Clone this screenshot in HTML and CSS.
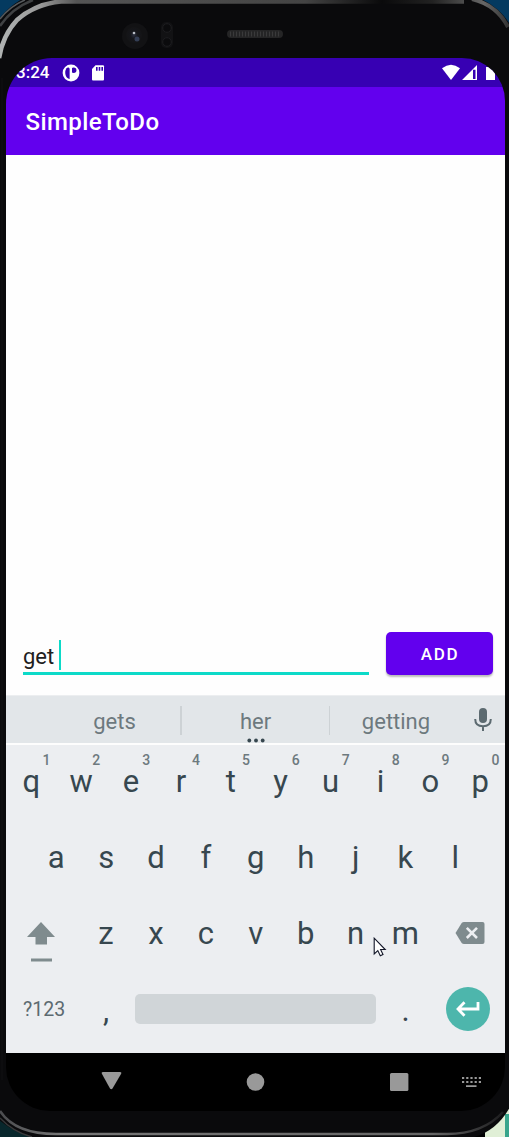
FILE: index.html
```html
<!DOCTYPE html>
<html lang="en">
<head>
<meta charset="utf-8">
<title>SimpleToDo</title>
<link rel="stylesheet" href="styles.css">
</head>
<body>
<main class="device">
  <svg class="frame" width="509" height="1137" viewBox="0 0 509 1137" aria-hidden="true">
    <defs>
      <linearGradient id="rim" gradientUnits="userSpaceOnUse" x1="0" x2="509" y1="0" y2="0">
        <stop offset="0" stop-color="#b0b3b3"/><stop offset=".08" stop-color="#999"/><stop offset=".15" stop-color="#555"/><stop offset=".6" stop-color="#444"/><stop offset=".75" stop-color="#0a0a0b"/><stop offset=".85" stop-color="#222"/><stop offset=".95" stop-color="#666"/><stop offset="1" stop-color="#333"/>
      </linearGradient>
      <linearGradient id="base" gradientUnits="userSpaceOnUse" x1="0" x2="509" y1="0" y2="0">
        <stop offset="0" stop-color="#4b4c4f"/><stop offset=".12" stop-color="#777"/><stop offset=".85" stop-color="#666"/><stop offset="1" stop-color="#161618"/>
      </linearGradient>
      <radialGradient id="lens"><stop offset="0" stop-color="#2b3040"/><stop offset=".45" stop-color="#15161b"/><stop offset="1" stop-color="#141416"/></radialGradient>
    </defs>
    <rect width="509" height="600" fill="#043a60"/>
    <path d="M0 1080h100v57H0z" fill="#08272c"/>
    <path d="M485 1100h24v37h-24z" fill="#e0efd6"/>
    <path d="M505 1114h4v23h-4z" fill="#38a58c"/>
    <path d="M-2 20Q9 6 24-2H479Q500 7 511 26V1105Q498 1130 474 1137H30Q12 1131-2 1119Z" fill="#0a0a0c"/>
    <path d="M0 19Q10 6 25 0" fill="none" stroke="#55595c" stroke-width="1.5"/>
    <path d="M0 26Q12 8 33 0" fill="none" stroke="#3f4143" stroke-width="2.5"/>
    <path d="M-1 58Q3 35 17 20Q35 4 61 1.5H464" fill="none" stroke="url(#rim)" stroke-width="4.6"/>
    <path d="M472 -1Q497 5 508 27" fill="none" stroke="url(#rim)" stroke-width="4"/>
    <path d="M2 78V1080" stroke="#111012"/>
    <path d="M0 1111Q15 1134 56 1134H447Q483 1134 503 1112" fill="none" stroke="url(#base)" stroke-width="2.5"/>
    <path d="M0 1118Q13 1132 32 1137" fill="none" stroke="#38393b" stroke-width="1.5"/>
    <circle cx="135" cy="36" r="13" fill="#121214"/>
    <circle cx="134" cy="35" r="8" fill="url(#lens)"/>
    <circle cx="137" cy="39" r="2.5" fill="#343e55"/>
    <circle cx="134" cy="33" r="1.3" fill="#b8bdc5"/>
    <rect x="161" y="22" width="12" height="26" rx="5" fill="#121214"/>
    <circle cx="167" cy="28" r="4.3" fill="#0b0b0d" stroke="#1d1d20"/>
    <circle cx="167" cy="42" r="4.3" fill="#0b0b0d" stroke="#1d1d20"/>
    <rect x="227" y="30" width="56" height="8" rx="4" fill="#252526"/>
    <path d="M230 34H281" stroke="#3a3a3b" stroke-width="5" stroke-dasharray="1 2"/>
  </svg>

  <div class="screen">
    <div class="status">
      <span class="clock">3:24</span>
      <svg class="status-left" width="44" height="20" viewBox="0 0 44 20">
        <circle cx="9" cy="10" r="8.4" fill="#fff"/>
        <path d="M4.3 5.5C5.5 4 7.5 4.2 7.6 6V16C3.5 15.5 2 9 4.3 5.5Z" fill="#3700b3"/>
        <circle cx="11.7" cy="7.2" r="2.7" fill="#3700b3"/><path d="M8.2 4H10v7.3H8.2z" fill="#fff"/>
        <path d="M33.5 2.2H41q1 0 1 1V16.5q0 1-1 1H31q-1 0-1-1V6Z" fill="#fff"/>
        <path d="M34 4h1.6v3.8H34zM36.7 4h1.6v3.8h-1.6zM39.4 4H41v3.8h-1.6z" fill="#3700b3"/>
      </svg>
      <svg class="status-right" width="63" height="20" viewBox="0 0 63 20">
        <path d="M0 5.2Q9 -1.8 18 5.2L9 17Z" fill="#fff"/>
        <path d="M20 17L35 2V17ZM31 6.7V16H33.5V6.7Z" fill="#fff" fill-rule="evenodd"/>
        <path d="M44 4H53V17H44Z" fill="#fff"/>
      </svg>
    </div>
    <header class="appbar">SimpleToDo</header>
    <section class="content">
      <div class="entry"><span>get</span><i class="caret"></i></div>
      <button class="add">ADD</button>
    </section>

    <div class="suggestions">
      <span class="suggestion first">gets</span>
      <span class="suggestion second">her<svg class="dots" width="18" height="5" viewBox="0 0 18 5"><circle cx="2.3" cy="2.5" r="1.9"/><circle cx="9" cy="2.5" r="1.9"/><circle cx="15.7" cy="2.5" r="1.9"/></svg></span>
      <span class="suggestion third">getting</span>
      <svg class="mic" width="18" height="24" viewBox="0 0 18 24"><rect x="5" y="0" width="8" height="15" rx="4" fill="#5c6a70"/><path d="M1.2 11q0 7.2 7.8 7.2T16.8 11M9 18v5" fill="none" stroke="#5c6a70" stroke-width="2"/></svg>
    </div>

    <div class="keyboard">
      <div class="keys">
        <span class="key">q<sup>1</sup></span><span class="key">w<sup>2</sup></span><span class="key">e<sup>3</sup></span><span class="key">r<sup>4</sup></span><span class="key">t<sup>5</sup></span><span class="key">y<sup>6</sup></span><span class="key">u<sup>7</sup></span><span class="key">i<sup>8</sup></span><span class="key">o<sup>9</sup></span><span class="key">p<sup>0</sup></span>
      </div>
      <div class="keys inset">
        <span class="key">a</span><span class="key">s</span><span class="key">d</span><span class="key">f</span><span class="key">g</span><span class="key">h</span><span class="key">j</span><span class="key">k</span><span class="key">l</span>
      </div>
      <div class="keys">
        <span class="wide shift"><svg width="30" height="42" viewBox="0 0 30 42"><path d="M15 1L29 16H21V23.5H9.5V16H1ZM5 37.5H26V40.5H5Z" fill="#7f8b8e"/></svg></span>
        <span class="key">z</span><span class="key">x</span><span class="key">c</span><span class="key">v</span><span class="key">b</span><span class="key">n</span><span class="key">m</span>
        <span class="wide erase"><svg width="30" height="24" viewBox="0 0 30 24"><path d="M9 1H27.5Q29.5 1 29.5 3V21Q29.5 23 27.5 23H9Q7.5 23 6.7 22L.5 12L6.7 2Q7.5 1 9 1Z" fill="#7f8b8e"/><path d="M11.8 6.8L22 17M22 6.8L11.8 17" stroke="#eceef1" stroke-width="2.6"/></svg></span>
      </div>
      <div class="keys">
        <span class="wide symbols">?123</span>
        <span class="key mark">,</span>
        <span class="space"></span>
        <span class="key mark">.</span>
        <span class="wide"><span class="enter"><svg width="24" height="16" viewBox="0 0 24 16"><path d="M22 1V8H2.5M8.5 1.2L2 8L8.5 14.8" fill="none" stroke="#fff" stroke-width="2.8"/></svg></span></span>
      </div>
    </div>

    <nav class="navbar">
      <svg width="499" height="58" viewBox="0 0 499 58" fill="#999">
        <path d="M97 19H114Q116 19 115 21L106.5 35.5Q105.3 37 104 35.5L96 21Q95 19 97 19Z"/>
        <circle cx="249.5" cy="29" r="8.8"/>
        <rect x="384" y="20" width="18.4" height="18" rx="1.5"/>
        <path d="M456 25H475M456 29H475" stroke="#999" stroke-width="2" stroke-dasharray="2.2 2"/>
        <path d="M460 32.2H470.5V34H460Z"/>
      </svg>
    </nav>
  </div>
  <svg class="pointer" width="14" height="20" viewBox="0 0 14 20"><path d="M1.2 1.2V17L4.8 13.6L7.3 18.7L10 17.5L7.6 12.5H12.2Z" fill="#fff" stroke="#111527" stroke-width="1.1"/></svg>
</main>
</body>
</html>
```

FILE: styles.css
```css
* { box-sizing: border-box; }
body { margin: 0; background: #000; font-family: Roboto, sans-serif; }
svg { display: block; flex: none; }

.device { position: relative; width: 509px; height: 1137px; padding: 58px 4px 26px 6px; overflow: hidden; }
.frame { position: absolute; left: 0; top: 0; }
.screen { position: relative; display: flex; flex-direction: column; width: 499px; height: 1053px; overflow: hidden; border-radius: 46px 43px 44px 44px; }

.status { display: flex; align-items: center; height: 29px; padding-left: 10px; background: #3700b3; color: #fff; }
.clock { width: 46px; font-size: 17px; font-weight: 500; line-height: 31px; }
.status-right { margin: 0 0 0 auto; }
.appbar { height: 68px; padding-left: 19.5px; background: #6200ee; color: #fff; font-size: 24px; font-weight: 500; line-height: 71px; letter-spacing: .4px; }

.content { display: flex; align-items: flex-end; gap: 17px; height: 540px; padding: 0 12px 20px 17px; background: #fefefe; }
.entry { display: flex; align-items: center; gap: 5px; width: 346px; height: 37px; border-bottom: 3px solid #0cdac8; color: #202020; font-size: 22px; }
.entry span { padding-top: 2px; }
.caret { width: 2px; height: 30px; background: #0cdac8; }
.add { width: 107px; height: 43px; padding: 0 0 0 1px; border: 0; border-radius: 5px; background: #6200ee; box-shadow: 0 2px 2px #0004; color: #fff; font: 500 17px/44px Roboto, sans-serif; letter-spacing: 1.6px; }

.suggestions { display: flex; align-items: center; height: 50px; padding-top: 1px; border-top: 1px solid #eceef0; border-bottom: 2px solid #fdfdfd; background: #e2e6e9; color: #6d797e; font-size: 22px; }
.suggestion { position: relative; height: 29px; line-height: 31px; text-align: center; }
.first { width: 176px; padding-left: 43px; border-right: 2px solid #cdd2d5; }
.second { width: 148px; border-right: 1px solid #cdd2d5; }
.third { width: 132px; }
.dots { position: absolute; left: 64.5px; bottom: -8px; fill: #37474f; }
.mic { margin-left: 12px; }

.keyboard { height: 308px; background: #eceef1; color: #37474f; }
.keys { display: flex; height: 76px; }
.inset { padding: 0 25px; }
.key { position: relative; flex: 0 0 49.9px; padding-left: .6px; font-size: 31px; line-height: 74px; text-align: center; }
.key sup { position: absolute; right: 0; top: 6px; width: 19px; color: #6d797e; font-size: 14px; font-weight: 500; line-height: 18px; }
.mark { line-height: 76px; }
.wide { display: flex; flex: 0 0 74.8px; align-items: center; }
.shift { padding: 13px 0 0 20px; }
.erase { padding: 0 0 4px 25px; }
.symbols { padding: 0 0 3px 17px; color: #5c6a70; font-size: 19.5px; }
.space { flex: 0 0 241px; height: 30px; margin: 21px 4.3px 0; border-radius: 5px; background: #d0d5d8; }
.enter { display: flex; align-items: center; justify-content: center; width: 44px; height: 44px; margin: 0 0 4px 16px; border-radius: 50%; background: #4db6ac; }
.navbar { height: 58px; background: #000; }
.pointer { position: absolute; left: 372.5px; top: 937px; }
```
